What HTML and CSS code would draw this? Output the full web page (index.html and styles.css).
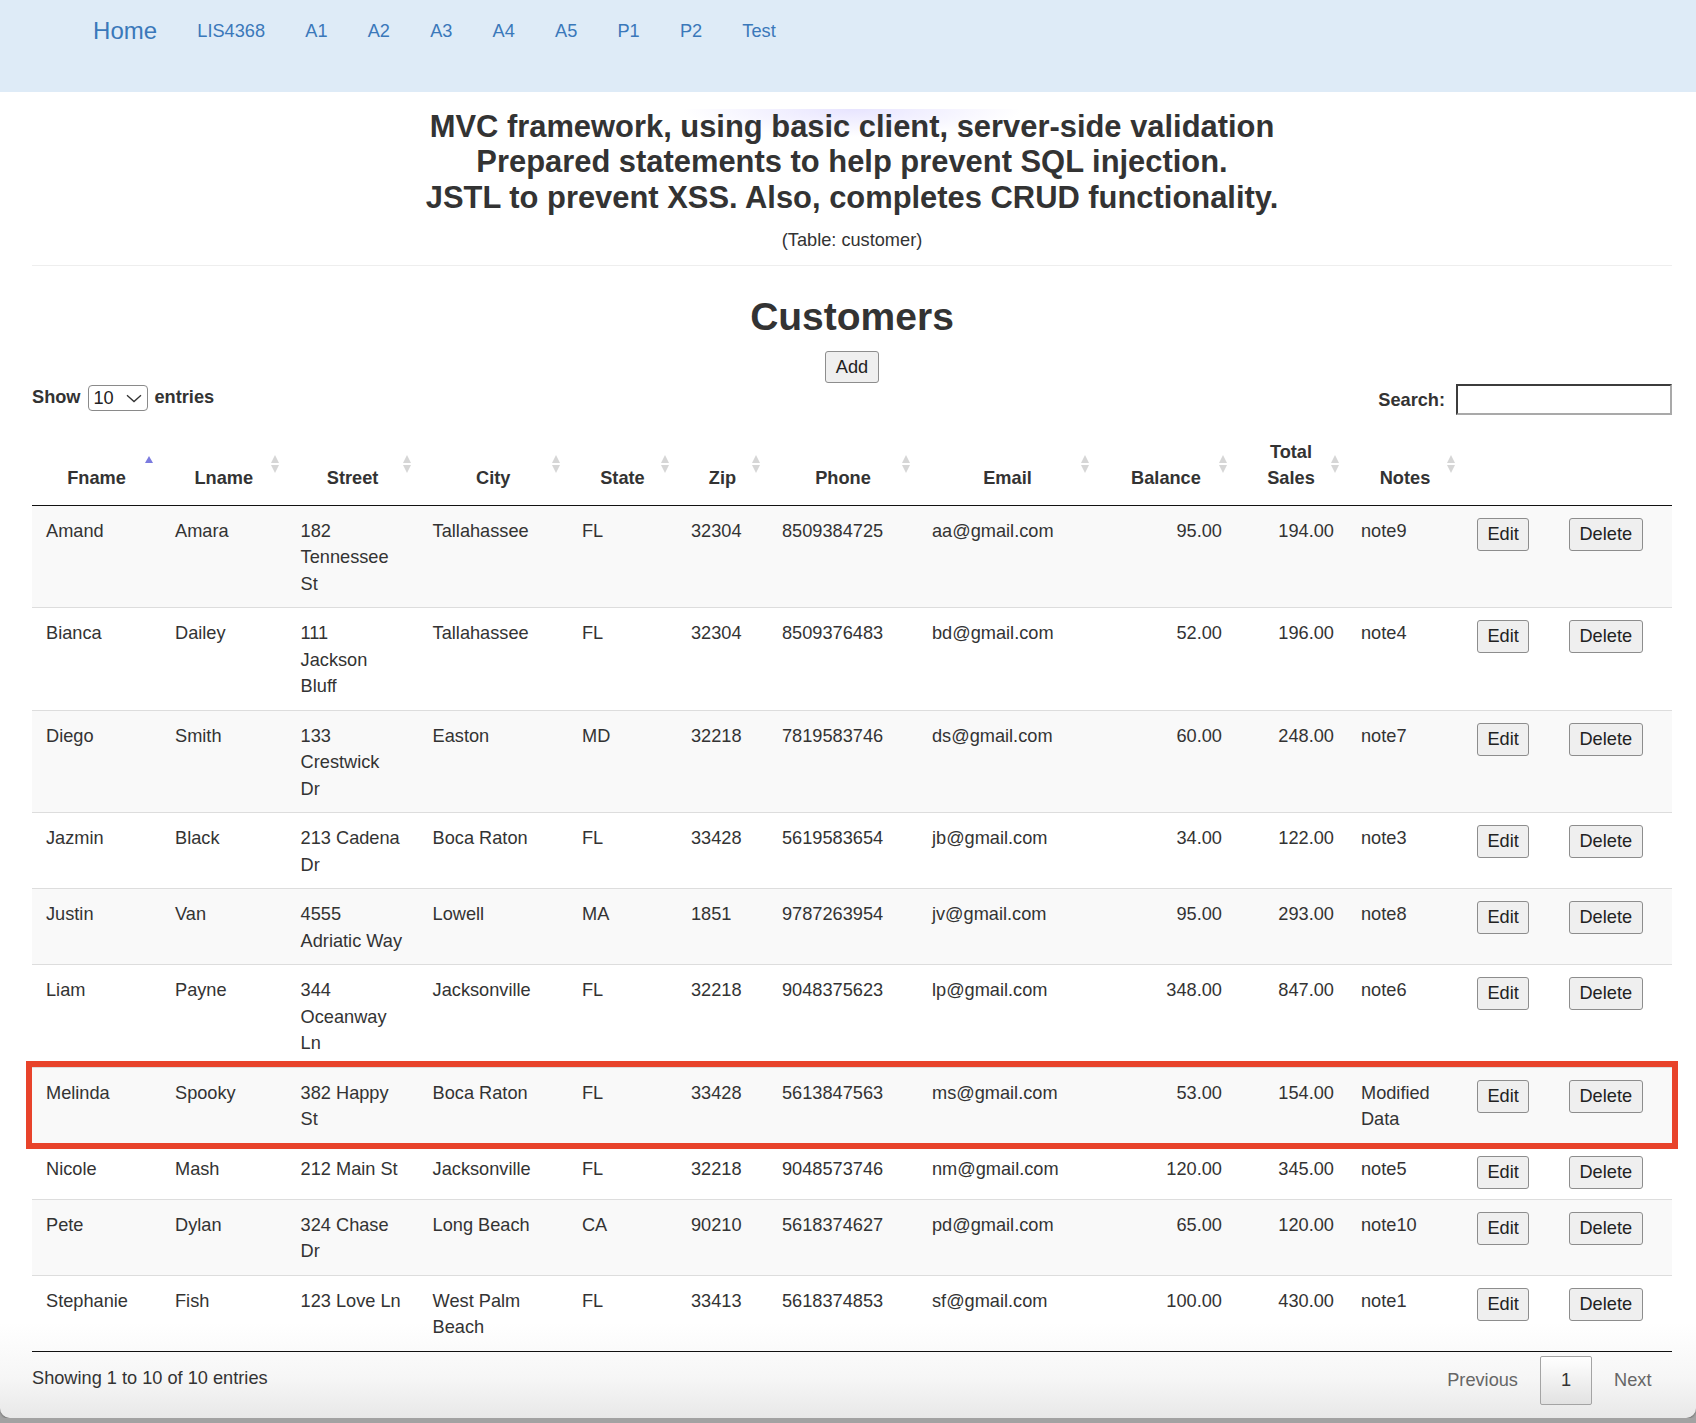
FILE: index.html
```html
<!DOCTYPE html>
<html lang="en">
<head>
<meta charset="utf-8">
<title>Customers</title>
<link rel="stylesheet" href="styles.css">
</head>
<body>
<div class="window">
  <nav class="navbar">
    <a class="brand" href="#">Home</a>
    <a class="nav-link" href="#">LIS4368</a>
    <a class="nav-link" href="#">A1</a>
    <a class="nav-link" href="#">A2</a>
    <a class="nav-link" href="#">A3</a>
    <a class="nav-link" href="#">A4</a>
    <a class="nav-link" href="#">A5</a>
    <a class="nav-link" href="#">P1</a>
    <a class="nav-link" href="#">P2</a>
    <a class="nav-link" href="#">Test</a>
  </nav>
  <main class="content">
    <h3 class="intro">MVC framework, using basic client, server-side validation<br>Prepared statements to help prevent SQL injection.<br>JSTL to prevent XSS. Also, completes CRUD functionality.</h3>
    <p class="table-name">(Table: customer)</p>
    <hr class="divider">
    <h2 class="title">Customers</h2>
    <div class="add-row"><button class="btn" type="button">Add</button></div>

    <div class="dt-controls">
      <label class="dt-length">Show
        <span class="select-wrap">
          <select class="length-select"><option>10</option><option>25</option><option>50</option></select>
          <svg class="chevron" width="16" height="9" viewBox="0 0 16 9"><path d="M1 1.2 L8 7.6 L15 1.2" fill="none" stroke="#333" stroke-width="1.3"/></svg>
        </span>
        entries</label>
      <label class="dt-filter">Search: <input class="search-input" type="search"></label>
    </div>

    <table class="dt">
      <colgroup>
        <col class="c-fname"><col class="c-lname"><col class="c-street"><col class="c-city"><col class="c-state"><col class="c-zip"><col class="c-phone"><col class="c-email"><col class="c-balance"><col class="c-total"><col class="c-notes"><col class="c-edit"><col class="c-delete">
      </colgroup>
      <thead>
        <tr>
          <th class="sort-asc">Fname</th>
          <th class="sortable">Lname</th>
          <th class="sortable">Street</th>
          <th class="sortable">City</th>
          <th class="sortable">State</th>
          <th class="sortable">Zip</th>
          <th class="sortable">Phone</th>
          <th class="sortable">Email</th>
          <th class="sortable">Balance</th>
          <th class="sortable">Total Sales</th>
          <th class="sortable">Notes</th>
          <th></th>
          <th></th>
        </tr>
      </thead>
      <tbody>
        <tr><td>Amand</td><td>Amara</td><td>182 Tennessee St</td><td>Tallahassee</td><td>FL</td><td>32304</td><td>8509384725</td><td>aa@gmail.com</td><td class="num">95.00</td><td class="num">194.00</td><td>note9</td><td><button class="btn" type="button">Edit</button></td><td><button class="btn" type="button">Delete</button></td></tr>
        <tr><td>Bianca</td><td>Dailey</td><td>111<br>Jackson Bluff</td><td>Tallahassee</td><td>FL</td><td>32304</td><td>8509376483</td><td>bd@gmail.com</td><td class="num">52.00</td><td class="num">196.00</td><td>note4</td><td><button class="btn" type="button">Edit</button></td><td><button class="btn" type="button">Delete</button></td></tr>
        <tr><td>Diego</td><td>Smith</td><td>133 Crestwick<br>Dr</td><td>Easton</td><td>MD</td><td>32218</td><td>7819583746</td><td>ds@gmail.com</td><td class="num">60.00</td><td class="num">248.00</td><td>note7</td><td><button class="btn" type="button">Edit</button></td><td><button class="btn" type="button">Delete</button></td></tr>
        <tr><td>Jazmin</td><td>Black</td><td>213 Cadena Dr</td><td>Boca Raton</td><td>FL</td><td>33428</td><td>5619583654</td><td>jb@gmail.com</td><td class="num">34.00</td><td class="num">122.00</td><td>note3</td><td><button class="btn" type="button">Edit</button></td><td><button class="btn" type="button">Delete</button></td></tr>
        <tr><td>Justin</td><td>Van</td><td>4555 Adriatic&nbsp;Way</td><td>Lowell</td><td>MA</td><td>1851</td><td>9787263954</td><td>jv@gmail.com</td><td class="num">95.00</td><td class="num">293.00</td><td>note8</td><td><button class="btn" type="button">Edit</button></td><td><button class="btn" type="button">Delete</button></td></tr>
        <tr><td>Liam</td><td>Payne</td><td>344 Oceanway Ln</td><td>Jacksonville</td><td>FL</td><td>32218</td><td>9048375623</td><td>lp@gmail.com</td><td class="num">348.00</td><td class="num">847.00</td><td>note6</td><td><button class="btn" type="button">Edit</button></td><td><button class="btn" type="button">Delete</button></td></tr>
        <tr class="highlight"><td>Melinda</td><td>Spooky</td><td>382 Happy St</td><td>Boca Raton</td><td>FL</td><td>33428</td><td>5613847563</td><td>ms@gmail.com</td><td class="num">53.00</td><td class="num">154.00</td><td>Modified Data</td><td><button class="btn" type="button">Edit</button></td><td><button class="btn" type="button">Delete</button></td></tr>
        <tr><td>Nicole</td><td>Mash</td><td>212 Main St</td><td>Jacksonville</td><td>FL</td><td>32218</td><td>9048573746</td><td>nm@gmail.com</td><td class="num">120.00</td><td class="num">345.00</td><td>note5</td><td><button class="btn" type="button">Edit</button></td><td><button class="btn" type="button">Delete</button></td></tr>
        <tr><td>Pete</td><td>Dylan</td><td>324 Chase Dr</td><td>Long Beach</td><td>CA</td><td>90210</td><td>5618374627</td><td>pd@gmail.com</td><td class="num">65.00</td><td class="num">120.00</td><td>note10</td><td><button class="btn" type="button">Edit</button></td><td><button class="btn" type="button">Delete</button></td></tr>
        <tr><td>Stephanie</td><td>Fish</td><td>123 Love Ln</td><td>West Palm Beach</td><td>FL</td><td>33413</td><td>5618374853</td><td>sf@gmail.com</td><td class="num">100.00</td><td class="num">430.00</td><td>note1</td><td><button class="btn" type="button">Edit</button></td><td><button class="btn" type="button">Delete</button></td></tr>
      </tbody>
    </table>

    <div class="dt-footer">
      <div class="dt-info">Showing 1 to 10 of 10 entries</div>
      <div class="dt-paginate">
        <a class="page-btn disabled">Previous</a>
        <a class="page-btn current">1</a>
        <a class="page-btn disabled">Next</a>
      </div>
    </div>
  </main>
</div>
</body>
</html>
```
FILE: styles.css
```css
* { box-sizing: border-box; }

html, body {
  margin: 0;
  padding: 0;
}

body {
  background: #a2a2a2;
  font-family: "Liberation Sans", Arial, Helvetica, sans-serif;
  font-size: 18.2px;
  line-height: 26.5px;
  color: #333;
}

.window {
  height: 1418px;
  background: linear-gradient(to top, #e8e8e8 0px, #f6f6f6 40px, #ffffff 95px);
  border-radius: 0 0 10px 10px;
  box-shadow: 0 1px 2px rgba(0, 0, 0, 0.35);
  overflow: hidden;
}

/* ---------- navbar ---------- */
.navbar {
  height: 92px;
  background: #deebf7;
  display: flex;
  align-items: flex-start;
  padding: 18px 0 0 73px;
}

.navbar a {
  color: #3a78ba;
  text-decoration: none;
  line-height: 26px;
  padding: 0 20.1px;
}

.brand { font-size: 24px; }
.nav-link { font-size: 18.2px; }

/* ---------- content ---------- */
.content {
  padding: 0 24px 0 32px;
  background: radial-gradient(ellipse 170px 28px at 852px 0px, rgba(196, 188, 255, 0.4), rgba(255, 255, 255, 0) 100%) no-repeat;
}

.intro {
  margin: 17px 0 0;
  font-size: 30.9px;
  line-height: 35.3px;
  font-weight: bold;
  text-align: center;
  color: #333;
}

.table-name {
  margin: 12px 0 0;
  font-size: 18.2px;
  line-height: 26px;
  text-align: center;
}

.divider {
  margin: 12.5px 0 0;
  border: 0;
  border-top: 1px solid #eee;
  height: 0;
}

.title {
  margin: 28.5px 0 0;
  font-size: 39px;
  line-height: 43px;
  font-weight: bold;
  text-align: center;
  color: #333;
}

.add-row {
  margin-top: 13.5px;
  display: flex;
  justify-content: center;
}

.btn {
  font-family: "Liberation Sans", Arial, Helvetica, sans-serif;
  font-size: 18.2px;
  color: #222;
  height: 33px;
  padding: 0 9.5px;
  border: 1px solid #8d8d8d;
  border-radius: 3px;
  background: #efefef;
  line-height: normal;
}

.add-row .btn { height: 32px; }

/* ---------- datatable controls ---------- */
.dt-controls {
  margin-top: 1px;
  display: flex;
  justify-content: space-between;
  align-items: flex-start;
  font-weight: bold;
}

.dt-length, .dt-filter {
  display: flex;
  align-items: center;
}

.dt-length { gap: 7px; }
.dt-filter { gap: 11px; }

.select-wrap {
  position: relative;
  display: inline-block;
  height: 26px;
}

.length-select {
  appearance: none;
  -webkit-appearance: none;
  width: 60px;
  height: 26px;
  border: 1px solid #8a8a8a;
  border-radius: 4px;
  background: #fff;
  font-family: "Liberation Sans", Arial, Helvetica, sans-serif;
  font-size: 18.2px;
  color: #222;
  padding: 0 0 0 5px;
  margin: 0;
}

.chevron {
  position: absolute;
  right: 6px;
  top: 9px;
  pointer-events: none;
}

.search-input {
  width: 216px;
  height: 31px;
  margin: 0;
  border-style: solid;
  border-width: 2px;
  border-color: #3c3c3c #a9a9a9 #a9a9a9 #3c3c3c;
  background: #fff;
  font-size: 18.2px;
}

/* ---------- table ---------- */
.dt {
  margin-top: 10.5px;
  width: 1640px;
  table-layout: fixed;
  border-collapse: collapse;
  border-spacing: 0;
  border-bottom: 1px solid #111;
}

.c-fname { width: 129px; }
.c-lname { width: 125.6px; }
.c-street { width: 132px; }
.c-city { width: 149.4px; }
.c-state { width: 109px; }
.c-zip { width: 91px; }
.c-phone { width: 150px; }
.c-email { width: 179px; }
.c-balance { width: 138px; }
.c-total { width: 112px; }
.c-notes { width: 116px; }
.c-edit { width: 92px; }
.c-delete { width: 117px; }

.dt th {
  position: relative;
  padding: 13px 23.4px;
  vertical-align: bottom;
  text-align: center;
  font-weight: bold;
  line-height: 26.5px;
  border-bottom: 1px solid #111;
}

.dt th.sortable::before,
.dt th.sortable::after,
.dt th.sort-asc::before {
  content: "";
  position: absolute;
  right: 8px;
  top: 50%;
  width: 0;
  height: 0;
  border-left: 4.5px solid transparent;
  border-right: 4.5px solid transparent;
}

.dt th.sortable::before {
  margin-top: -10px;
  border-bottom: 8px solid #d6d6d6;
}

.dt th.sortable::after {
  margin-top: 0px;
  border-top: 8px solid #d6d6d6;
}

.dt th.sort-asc::before {
  margin-top: -9px;
  border-bottom: 7px solid #7b7bdf;
}

.dt td {
  padding: 12px 13px 10px 14px;
  vertical-align: top;
  line-height: 26.5px;
  border-top: 1px solid #ddd;
}

.dt tbody tr:first-child td { border-top: none; }

.dt tbody tr:nth-child(odd) { background: #f9f9f9; }

.dt td.num { text-align: right; }

.dt tr.highlight {
  outline: 6px solid #e8432b;
  outline-offset: 0;
}

/* ---------- footer ---------- */
.dt-footer {
  display: flex;
  justify-content: space-between;
  align-items: flex-start;
}

.dt-info {
  padding-top: 13.2px;
}

.dt-paginate {
  padding-top: 4px;
  display: flex;
}

.page-btn {
  display: block;
  padding: 10.2px 19.5px;
  margin-left: 2px;
  border: 1px solid transparent;
  border-radius: 2px;
  line-height: 26.5px;
  color: #666;
  text-decoration: none;
}

.page-btn.current {
  color: #333;
  border: 1px solid #a4a4a4;
  background: linear-gradient(to bottom, #ffffff 0%, #e2e2e2 100%);
}
```
